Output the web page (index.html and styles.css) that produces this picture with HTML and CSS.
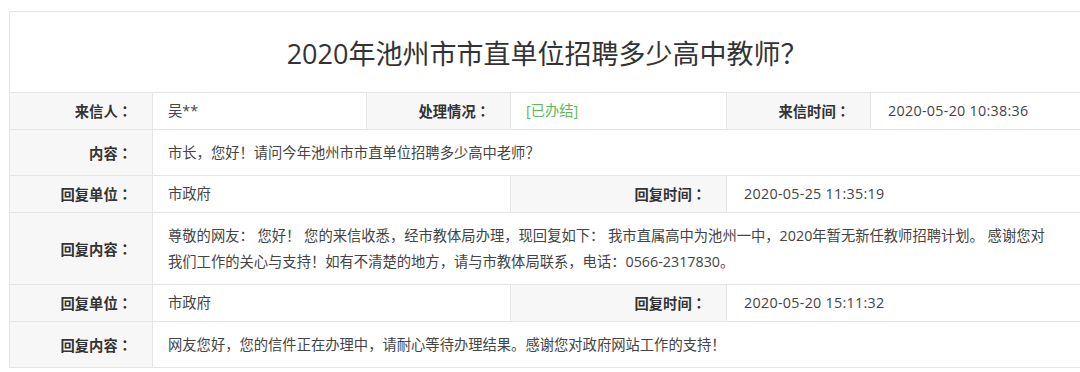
FILE: index.html
```html
<!DOCTYPE html>
<html lang="zh-CN">
<head>
<meta charset="utf-8">
<title>2020年池州市市直单位招聘多少高中教师？</title>
<link rel="stylesheet" href="styles.css">
</head>
<body>
<div class="page">
  <table class="letter">
    <colgroup>
      <col class="c-label">
      <col class="c-value">
      <col class="c-label2">
      <col class="c-value2">
      <col class="c-label2">
      <col class="c-value">
    </colgroup>
    <tr>
      <td colspan="6" class="title">2020年池州市市直单位招聘多少高中教师？</td>
    </tr>
    <tr class="info">
      <th>来信人：</th>
      <td>吴**</td>
      <th>处理情况：</th>
      <td class="done">[已办结]</td>
      <th>来信时间：</th>
      <td class="time">2020-05-20 10:38:36</td>
    </tr>
    <tr class="body">
      <th>内容：</th>
      <td colspan="5">市长，您好！请问今年池州市市直单位招聘多少高中老师？</td>
    </tr>
    <tr class="info">
      <th>回复单位：</th>
      <td colspan="2">市政府</td>
      <th>回复时间：</th>
      <td colspan="2" class="time">2020-05-25 11:35:19</td>
    </tr>
    <tr class="body">
      <th>回复内容：</th>
      <td colspan="5">尊敬的网友： 您好！ 您的来信收悉，经市教体局办理，现回复如下： 我市直属高中为池州一中，2020年暂无新任教师招聘计划。 感谢您对<br>我们工作的关心与支持！如有不清楚的地方，请与市教体局联系，电话：0566-2317830。</td>
    </tr>
    <tr class="info">
      <th>回复单位：</th>
      <td colspan="2">市政府</td>
      <th>回复时间：</th>
      <td colspan="2" class="time">2020-05-20 15:11:32</td>
    </tr>
    <tr class="body">
      <th>回复内容：</th>
      <td colspan="5">网友您好，您的信件正在办理中，请耐心等待办理结果。感谢您对政府网站工作的支持！</td>
    </tr>
  </table>
</div>
</body>
</html>
```

FILE: styles.css
```css
html, body {
  margin: 0;
  padding: 0;
  background: #ffffff;
  overflow: hidden;
}

.page {
  padding: 11px 0 0 9px;
  width: 1100px;
  font-family: "Open Sans", "Noto Sans CJK SC", sans-serif;
  color: #333333;
}

.letter {
  border-collapse: collapse;
  table-layout: fixed;
  width: 1075px;
  font-size: 14.3px;
}

.c-label { width: 143px; }
.c-value { width: 214px; }
.c-label2 { width: 144px; }
.c-value2 { width: 216px; }

.letter td,
.letter th {
  border: 1px solid #e5e5e5;
  padding: 0;
  vertical-align: middle;
}

.letter th {
  background: #f7f7f7;
  font-family: "Noto Sans CJK TC", "Noto Sans CJK SC", sans-serif;
  font-feature-settings: "locl" 0;
  text-spacing-trim: space-all;
  font-weight: bold;
  text-align: right;
  padding-right: 20px;
  color: #333333;
}

.letter td {
  text-align: left;
  padding-left: 15px;
  padding-right: 6px;
  color: #444444;
}

.letter td.time {
  padding-left: 17px;
  letter-spacing: 0.3px;
}

.letter td.title {
  height: 80px;
  text-align: center;
  padding: 0;
  font-size: 27px;
  color: #333333;
  font-weight: normal;
}

.info th,
.info td {
  height: 36px;
  line-height: 20px;
}

.body th,
.body td {
  line-height: 26px;
  padding-top: 10px;
  padding-bottom: 9px;
}

.letter td.done {
  color: #5cb85c;
}
```
